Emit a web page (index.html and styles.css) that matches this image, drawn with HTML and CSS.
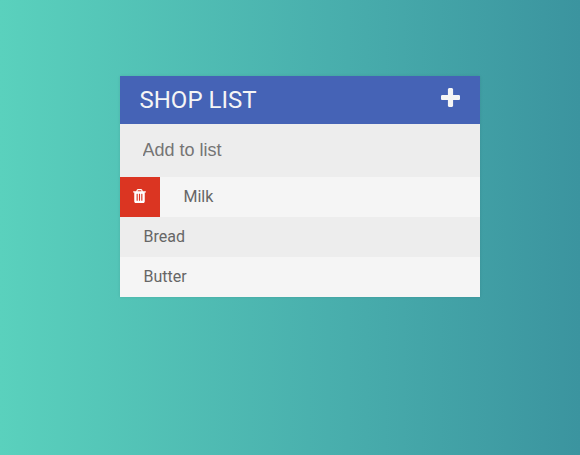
FILE: index.html
```html
<!DOCTYPE html>
<html lang="en">
<head>
<meta charset="utf-8">
<title>Shop List</title>
<link rel="stylesheet" href="styles.css">
</head>
<body>
<main class="list">
  <header class="list-header">
    <h1>SHOP LIST</h1>
    <svg class="plus" viewBox="0 0 1408 1408" aria-hidden="true"><path d="M1408 608v192q0 40-28 68t-68 28H896v416q0 40-28 68t-68 28H608q-40 0-68-28t-28-68V896H96q-40 0-68-28T0 800V608q0-40 28-68t68-28h416V96q0-40 28-68t68-28h192q40 0 68 28t28 68v416h416q40 0 68 28t28 68z"/></svg>
  </header>
  <input class="entry" type="text" placeholder="Add to list">
  <ul class="items">
    <li class="item"><span class="remove"><svg class="trash" viewBox="0 0 1408 1536" aria-hidden="true"><path d="M512 1248V544q0-32-32-32h-64q-32 0-32 32v704q0 32 32 32h64q32 0 32-32zm256 0V544q0-32-32-32h-64q-32 0-32 32v704q0 32 32 32h64q32 0 32-32zm256 0V544q0-32-32-32h-64q-32 0-32 32v704q0 32 32 32h64q32 0 32-32zM480 256h448l-48-117q-7-9-17-11H546q-10 2-17 11zm928 32v64q0 32-32 32h-96v948q0 83-47 143.500T1120 1536H288q-66 0-113-58.500T128 1336V384H32q-32 0-32-32v-64q0-32 32-32h309l70-167q15-37 54-63t79-26h320q40 0 79 26t54 63l70 167h309q32 0 32 32z"/></svg></span>Milk</li>
    <li class="item">Bread</li>
    <li class="item">Butter</li>
  </ul>
</main>
</body>
</html>
```
FILE: styles.css
```css
* { box-sizing: border-box; }
body {
  margin: 0;
  min-height: 100vh;
  padding: 76px 100px 0 120px;
  font-family: Roboto, sans-serif;
  background: linear-gradient(to right, #5ad1bd, #48adac 60%, #3b949f);
}
.list {
  width: 360px;
  background: #f5f5f5;
  box-shadow: 0 0 3px rgba(0, 0, 0, 0.1);
}
.list-header {
  display: flex;
  align-items: center;
  justify-content: space-between;
  height: 48px;
  padding: 0 20.3px 0 19.5px;
  background: #4563b6;
  color: #f5f5f5;
}
h1 {
  margin: 0;
  font-size: 24px;
  font-weight: 400;
  line-height: 48px;
}
.plus {
  width: 19px;
  height: 19px;
  margin-bottom: 5px;
  fill: currentColor;
}
.entry {
  display: block;
  width: 100%;
  height: 53px;
  padding: 0 22.5px 1px;
  border: 0;
  background: #ededed;
  font: 18px "Liberation Sans", Arial, sans-serif;
}
.entry::placeholder { color: #757575; }
.items {
  margin: 0;
  padding: 0;
  list-style: none;
}
.item {
  display: flex;
  height: 40px;
  padding-left: 23.5px;
  color: #666;
  font-size: 16px;
  line-height: 40px;
}
.item:nth-child(even) { background: #ededed; }
.remove {
  display: flex;
  align-items: center;
  justify-content: center;
  width: 40px;
  padding: 0 1px 2px 0;
  margin: 0 23.5px 0 -23.5px;
  background: #db3522;
  color: #fff;
}
.trash {
  width: 13px;
  height: 14px;
  fill: currentColor;
}
```
